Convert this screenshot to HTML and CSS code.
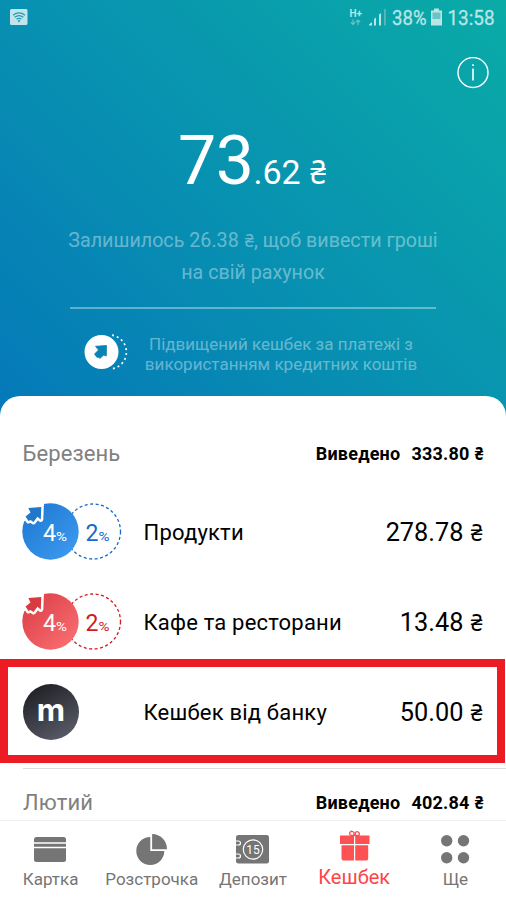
FILE: index.html
```html
<!DOCTYPE html>
<html lang="uk">
<head>
<meta charset="utf-8">
<title>Кешбек</title>
<link rel="stylesheet" href="styles.css">
</head>
<body>
<main class="screen">
  <header class="hero">
    <div class="status">
      <svg class="status-wifi" width="18" height="17" viewBox="0 0 18 17">
        <rect width="17.5" height="16" rx="1.5" fill="#c1e5ed"/>
        <g fill="none" stroke="#2a98b6" stroke-width="1.3"><path d="M3 6.2q6-4.6 12 0M4.6 8.3q4.400-3.400 8.800 0M6.500 10.300q2.500-2 5 0"/></g>
        <circle cx="9" cy="12.1" r="1.1" fill="#2a98b6"/>
      </svg>
      <svg class="status-info" width="156" height="30" viewBox="346 0 156 30" fill="#b9e5e5">
        <text x="349.500" y="17" font-size="10.500" font-weight="700" textLength="12.500" lengthAdjust="spacingAndGlyphs">H+</text>
        <g fill="none" stroke="#69c5c7" stroke-width="1.2"><path d="M353 19.5v5M350.8 22.3l2.2 2.2 2.2-2.2M358 25v-5M355.8 22.2l2.2-2.2 2.2 2.2"/></g>
        <path d="M369 25.500v-1l3-2.500v3.500zM374 19l2-1.500v8h-2zM379 14.500l2-1.500v12.500h-2z"/>
        <path d="M384 9.500l1.800-1v17H384z" fill="#56b9bc"/>
        <text x="392" y="24.500" font-size="21" textLength="34.500" lengthAdjust="spacingAndGlyphs" stroke="#b9e5e5" stroke-width=".3">38%</text>
        <path d="M431 10.500h3V8.500h5v2h3v15h-11z"/>
        <path d="M432.500 12.500h8v6.500h-8z" fill="#68c4c7"/>
        <text x="447.500" y="24.500" font-size="21" textLength="47" lengthAdjust="spacingAndGlyphs" stroke="#b9e5e5" stroke-width=".3">13:58</text>
      </svg>
    </div>
    <svg class="info" width="32" height="32" viewBox="0 0 32 32">
      <circle cx="16" cy="15.500" r="15" fill="none" stroke="#fff" stroke-width="1.400"/>
      <path d="M16 11.500v12M16 7.300v1.800" stroke="#fff" stroke-width="1.600"/>
    </svg>
    <div class="balance"><span class="whole">73</span><span class="cents">.62 <i class="uah">₴</i></span></div>
    <p class="remaining">Залишилось 26.38 <i class="uah">₴</i>, щоб вивести гроші<br>на свій рахунок</p>
    <div class="boost">
      <svg width="46" height="36" viewBox="0 0 46 36">
        <path d="M28 1.200a17 17 0 0 1 0 33.600" fill="none" stroke="#fff" stroke-width="1.700" stroke-dasharray="2 3"/>
        <circle cx="17.500" cy="18" r="17" fill="#fff"/>
        <path d="M11.500 12.300l11-.8-.2 10.500-2.500-1-4 3.500-1.300-1.500-1.500.4-2.500-3.400 4-4z" fill="#0784b2" stroke="#0784b2" stroke-width=".8" stroke-linejoin="round"/>
      </svg>
      <p>Підвищений кешбек за платежі з<br>використанням кредитних коштів</p>
    </div>
  </header>

  <section class="sheet">
    <div class="month"><h2>Березень</h2><div class="paid"><span>Виведено</span><span>333.80 <i class="uah">₴</i></span></div></div>

    <div class="row">
      <svg class="badge" width="102" height="60" viewBox="0 0 102 60">
        <defs><linearGradient id="blue" x1="0" y1="0" x2="1" y2="1"><stop offset=".1" stop-color="#2079d3"/><stop offset=".9" stop-color="#3b99ee"/></linearGradient></defs>
        <circle cx="71" cy="29.500" r="27.500" fill="none" stroke="#1469cb" stroke-width="1.300" stroke-dasharray="3 2.500"/>
        <circle cx="28.500" cy="29.500" r="28.200" fill="url(#blue)"/>
        <path d="M0 0h22v4L7 8l-1 8-3 3H0z" fill="#fff"/>
        <path class="arrow" d="M6.300 6l13-1-.5 12.500-3.300-2.700-4 5.200-3-2-2 1-3-4.500 5-4z" fill="#2377ca"/>
        <text x="21" y="38.500" font-size="23.500" fill="#fff">4</text><text class="percent" x="34" y="38.500" font-size="13.500" fill="#fff" textLength="11" lengthAdjust="spacingAndGlyphs">%</text>
        <text x="63.500" y="38.500" font-size="23" fill="#1469cb">2</text><text x="76.500" y="38.500" font-size="13.500" fill="#1469cb" textLength="11" lengthAdjust="spacingAndGlyphs">%</text>
      </svg>
      <span class="name">Продукти</span><span class="amount">278.78 <i class="uah">₴</i></span>
    </div>

    <div class="row">
      <svg class="badge" width="102" height="60" viewBox="0 0 102 60">
        <defs><linearGradient id="red" x1="0" y1="0" x2="1" y2="1"><stop offset=".1" stop-color="#dc4148"/><stop offset=".9" stop-color="#f86d70"/></linearGradient></defs>
        <circle cx="71" cy="29.500" r="27.500" fill="none" stroke="#d41922" stroke-width="1.300" stroke-dasharray="3 2.500"/>
        <circle cx="28.500" cy="29.500" r="28.200" fill="url(#red)"/>
        <path d="M0 0h22v4L7 8l-1 8-3 3H0z" fill="#fff"/>
        <path class="arrow" d="M6.300 6l13-1-.5 12.500-3.300-2.700-4 5.200-3-2-2 1-3-4.500 5-4z" fill="#d93c40"/>
        <text x="21" y="38.500" font-size="23.500" fill="#fff">4</text><text x="34" y="38.500" font-size="13.500" fill="#fff" textLength="11" lengthAdjust="spacingAndGlyphs">%</text>
        <text x="63.500" y="38.500" font-size="23" fill="#d41922">2</text><text x="76.500" y="38.500" font-size="13.500" fill="#d41922" textLength="11" lengthAdjust="spacingAndGlyphs">%</text>
      </svg>
      <span class="name">Кафе та ресторани</span><span class="amount">13.48 <i class="uah">₴</i></span>
    </div>

    <div class="row highlighted">
      <div class="mono">m</div>
      <span class="name bank">Кешбек від банку</span><span class="amount">50.00 <i class="uah">₴</i></span>
    </div>

    <div class="month next"><h2>Лютий</h2><div class="paid"><span>Виведено</span><span>402.84 <i class="uah">₴</i></span></div></div>
  </section>

  <nav class="tabs">
    <a class="tab"><svg width="36" height="34" viewBox="0 0 36 34"><rect x="1" y="5" width="32" height="25" rx="2.500" fill="#757575"/><path d="M1 11h32M1 15.500h32" stroke="#fff" stroke-width="1.400"/></svg><span>Картка</span></a>
    <a class="tab"><svg width="36" height="34" viewBox="0 0 36 34" fill="#757575"><path d="M16.300 5A14 14 0 1 0 30.300 19h-14z"/><path d="M18.100 2a15 15 0 0 1 14.900 15.200H18.100z"/></svg><span>Розстрочка</span></a>
    <a class="tab"><svg width="36" height="34" viewBox="0 0 36 34"><rect x="1" y="3" width="33" height="28.500" rx="2.500" fill="#757575"/><g fill="none" stroke="#fff" stroke-width="1.200"><circle cx="18" cy="17.500" r="9.700"/><path d="M1 9h2.500a1.800 1.800 0 0 1 0 4H1M1 22h2.500a1.800 1.800 0 0 1 0 4H1"/></g><text x="18" y="22" text-anchor="middle" font-size="12" fill="#fff">15</text></svg><span>Депозит</span></a>
    <a class="tab active"><svg width="36" height="34" viewBox="0 0 36 34" fill="#fe5154"><path d="M4 5.500h14v8.500H4zM19.200 5.500h14.300v8.500H19.200zM5.500 15.300H18V30.500H7.500a2 2 0 0 1-2-2zM19.200 15.300h13v13.200a2 2 0 0 1-2 2h-11z"/><path d="M18 5.500h-3a2.200 2.200 0 1 1 2.800-3zM19.200 5.500h3.500a2.200 2.200 0 1 0-3.300-3z" fill="none" stroke="#fe5154" stroke-width="1.300"/></svg><span>Кешбек</span></a>
    <a class="tab"><svg width="36" height="34" viewBox="0 0 36 34" fill="#757575"><circle cx="9.700" cy="8.700" r="5.700"/><circle cx="26.500" cy="8.700" r="5.700"/><circle cx="9.700" cy="25.700" r="5.700"/><circle cx="26.500" cy="25.700" r="5.700"/></svg><span>Ще</span></a>
  </nav>
</main>
</body>
</html>
```
FILE: styles.css
```css
* { box-sizing: border-box; }
body, p, h2 { margin: 0; }
body { font-family: Roboto, "Liberation Sans", sans-serif; background: #fff; }
svg { display: block; flex: none; }
.uah { display: inline-block; transform: scaleX(.87); font-family: "Noto Sans", sans-serif; font-style: normal; font-size: .96em; line-height: 1; letter-spacing: 0; }
.screen { width: 506px; height: 900px; display: flex; flex-direction: column; overflow: hidden; }
.hero { height: 425px; flex: none; display: flex; flex-direction: column; background: linear-gradient(45deg, #057ab8 4%, #0893b0 52%, #0aaba7 100%); }
.status { height: 57px; flex: none; display: flex; justify-content: space-between; padding: 0 4px 0 10px; }
.status-wifi { margin-top: 9px; }
.info { align-self: flex-end; margin-right: 17px; }
.balance { height: 76px; margin: 32px 0 0 178px; display: flex; align-items: baseline; color: #fff; white-space: pre; line-height: 80px; }
.whole { font-size: 68px; letter-spacing: -.5px; }
.cents { font-size: 34px; }
.remaining { margin-top: 28px; text-align: center; font-size: 19.7px; line-height: 32px; color: rgba(255,255,255,.4); }
.boost { margin: 18px 70px 0; padding: 25px 0 0 14px; border-top: 2px solid rgba(255,255,255,.36); display: flex; }
.boost p { width: 290px; margin: 0 0 0 6px; text-align: center; font-size: 17px; line-height: 20px; color: rgba(255,255,255,.4); white-space: nowrap; }
.sheet { height: 424px; margin-top: -29px; flex: none; background: #fff; border-radius: 20px 20px 0 0; overflow: hidden; padding-top: 1px; }
.month { height: 90px; padding: 22px 22px 0 22.5px; display: flex; align-items: center; justify-content: space-between; }
.month h2 { font-size: 22px; font-weight: 400; color: #808080; letter-spacing: .1px; }
.paid { display: flex; gap: 11px; font-size: 18px; font-weight: 700; letter-spacing: .2px; }
.row { height: 90px; padding: 0 23px 0 22px; display: flex; align-items: center; }
.name { margin-left: 19.5px; font-size: 22px; letter-spacing: .2px; white-space: nowrap; }
.amount { margin-left: auto; font-size: 25.3px; }
.highlighted { height: 104px; width: 505px; margin-top: -8px; padding: 2px 14px 0 15px; border: 8px solid #ed1c24; }
.mono { width: 56px; height: 56px; border-radius: 50%; background: linear-gradient(150deg, #202125 10%, #5c5e6c 95%); color: #fff; font: 700 31px/51px Inter, sans-serif; text-align: center; }
.bank { margin-left: 64.5px; }
.next { height: 70px; margin: 5px 0 0 23px; padding: 0 22px 2px 0; border-top: 1px solid #ddd; }
.arrow { stroke: #fff; stroke-width: 5px; stroke-linejoin: round; paint-order: stroke; }
.tabs { height: 80px; flex: none; display: grid; grid-template-columns: repeat(5, 1fr); border-top: 1px solid #eee; background: #fff; }
.tab { display: flex; flex-direction: column; align-items: center; padding-top: 11px; color: #757575; font-size: 17px; line-height: 20px; }
.tab span { margin-top: 3px; }
.active { color: #fe4448; font-size: 20px; padding-top: 9px; }
```
